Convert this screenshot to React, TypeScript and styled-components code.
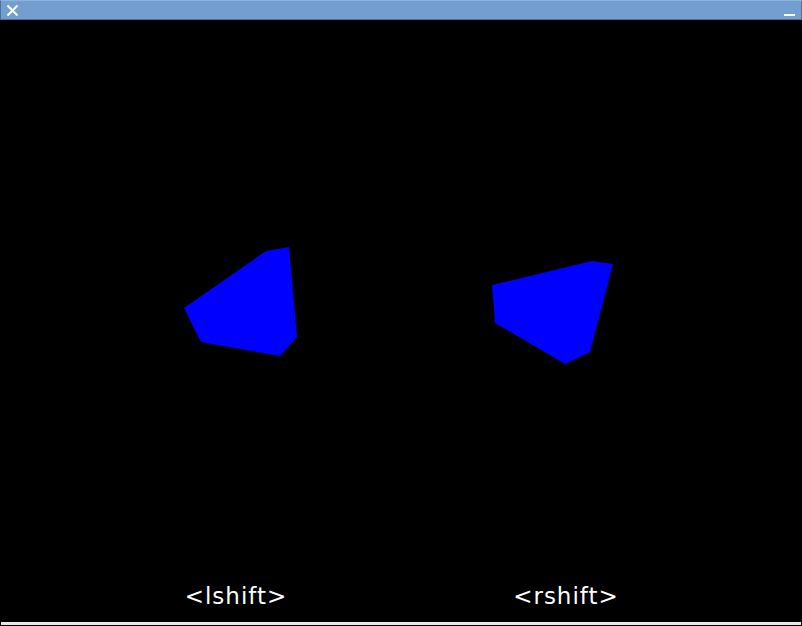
import styled, { createGlobalStyle } from "styled-components";

const Global = createGlobalStyle`
  html, body {
    margin: 0;
    padding: 0;
    background: #000;
  }
  body {
    font-family: "DejaVu Sans", "Liberation Sans", sans-serif;
  }
`;

const Window = styled.div`
  width: 802px;
  height: 626px;
  display: flex;
  flex-direction: column;
  background: #000;
  overflow: hidden;
`;

const TitleBar = styled.div`
  height: 20px;
  box-sizing: border-box;
  display: flex;
  align-items: center;
  justify-content: space-between;
  background: #729fcf;
  border: 1px solid #4f6f94;
  border-top-color: #8fb3dc;
  padding: 0 5px 0 4px;
`;

const TitleButton = styled.button`
  width: 14px;
  height: 14px;
  padding: 0;
  border: 0;
  background: none;
  display: flex;
  align-items: center;
  justify-content: center;
`;

const Stage = styled.svg`
  display: block;
  width: 802px;
  height: 555px;
  flex: none;
`;

const Labels = styled.div`
  height: 47px;
  box-sizing: border-box;
  padding-top: 8px;
  display: flex;
  justify-content: center;
`;

const KeyLabel = styled.div`
  width: 330px;
  text-align: center;
  color: #fff;
  font-size: 23px;
  letter-spacing: 1px;
  line-height: 26px;
`;

const BottomEdge = styled.div`
  height: 3px;
  margin: 0 1px;
  background: #e8e8e8;
  border-bottom: 1px solid #000;
`;

const shapes = [
  "184,308 266,251 289,247 297,337 280,356 201,342",
  "492,285 592,261 613,264 590,352 565,364 495,323",
];

export default function App() {
  return (
    <>
      <Global />
      <Window>
        <TitleBar>
          <TitleButton aria-label="close">
            <svg width="13" height="13" viewBox="0 0 13 13">
              <path d="M1.5 1.5 L11.5 11.5 M11.5 1.5 L1.5 11.5" stroke="#fff" strokeWidth="2" />
            </svg>
          </TitleButton>
          <TitleButton aria-label="minimize">
            <svg width="11" height="14" viewBox="0 0 11 14">
              <rect x="0" y="11" width="11" height="2" fill="#fff" />
            </svg>
          </TitleButton>
        </TitleBar>
        <Stage viewBox="0 20 802 555">
          {shapes.map((p) => (
            <polygon key={p} points={p} fill="#0000ff" />
          ))}
        </Stage>
        <Labels>
          <KeyLabel>&lt;lshift&gt;</KeyLabel>
          <KeyLabel>&lt;rshift&gt;</KeyLabel>
        </Labels>
        <BottomEdge />
      </Window>
    </>
  );
}
